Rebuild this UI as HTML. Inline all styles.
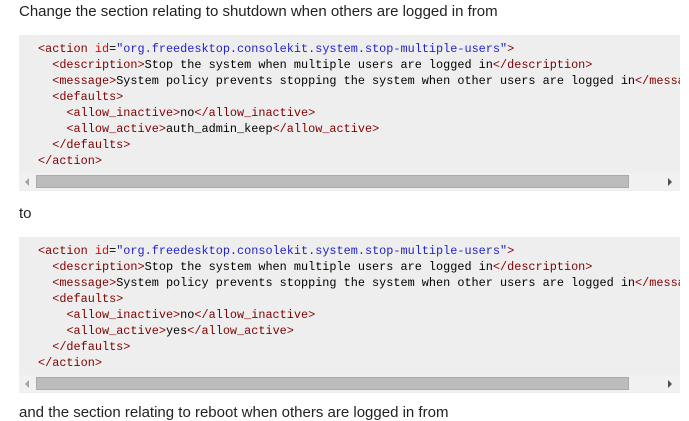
<!DOCTYPE html>
<html><head><style>
body{margin:0;width:689px;height:411px;overflow:hidden;background:#fff;position:relative;font-family:"Liberation Sans",Arial,sans-serif;}
.p{position:absolute;left:19px;font-size:15px;color:#222;margin:0;white-space:nowrap}
.blk{position:absolute;left:19px;width:661px;background:#eee;overflow:hidden}
pre{margin:0;padding:0 0 0 19px;font-family:"Liberation Mono",monospace;font-size:11.85px;line-height:16px;color:#000;white-space:pre}
.t{color:#800000}.a{color:#e00}.v{color:#2222cc}
.sb{position:absolute;left:0;right:0;height:17px;background:#f1f1f1}
.th{position:absolute;left:17px;width:593px;top:2px;height:13px;background:#bcbcbc;border:1px solid #aaa;box-sizing:border-box}
.la{position:absolute;left:6px;top:5px;width:0;height:0;border-top:4px solid transparent;border-bottom:4px solid transparent;border-right:4px solid #a3a3a3}
.ra{position:absolute;right:8px;top:5px;width:0;height:0;border-top:4px solid transparent;border-bottom:4px solid transparent;border-left:4px solid #505050}
</style></head><body>
<div class="p" style="top:3px">Change the section relating to shutdown when others are logged in from</div>
<div class="blk" style="top:35px;height:156px">
<pre style="padding-top:6px"><span class="t">&lt;action</span> <span class="a">id</span>=<span class="v">"org.freedesktop.consolekit.system.stop-multiple-users"</span><span class="t">&gt;</span>
  <span class="t">&lt;description&gt;</span>Stop the system when multiple users are logged in<span class="t">&lt;/description&gt;</span>
  <span class="t">&lt;message&gt;</span>System policy prevents stopping the system when other users are logged in<span class="t">&lt;/message&gt;</span>
  <span class="t">&lt;defaults&gt;</span>
    <span class="t">&lt;allow_inactive&gt;</span>no<span class="t">&lt;/allow_inactive&gt;</span>
    <span class="t">&lt;allow_active&gt;</span>auth_admin_keep<span class="t">&lt;/allow_active&gt;</span>
  <span class="t">&lt;/defaults&gt;</span>
<span class="t">&lt;/action&gt;</span></pre>
<div class="sb" style="top:138px"><div class="la"></div><div class="th"></div><div class="ra"></div></div>
</div>
<div class="p" style="top:205px">to</div>
<div class="blk" style="top:237px;height:156px">
<pre style="padding-top:6px"><span class="t">&lt;action</span> <span class="a">id</span>=<span class="v">"org.freedesktop.consolekit.system.stop-multiple-users"</span><span class="t">&gt;</span>
  <span class="t">&lt;description&gt;</span>Stop the system when multiple users are logged in<span class="t">&lt;/description&gt;</span>
  <span class="t">&lt;message&gt;</span>System policy prevents stopping the system when other users are logged in<span class="t">&lt;/message&gt;</span>
  <span class="t">&lt;defaults&gt;</span>
    <span class="t">&lt;allow_inactive&gt;</span>no<span class="t">&lt;/allow_inactive&gt;</span>
    <span class="t">&lt;allow_active&gt;</span>yes<span class="t">&lt;/allow_active&gt;</span>
  <span class="t">&lt;/defaults&gt;</span>
<span class="t">&lt;/action&gt;</span></pre>
<div class="sb" style="top:138px"><div class="la"></div><div class="th"></div><div class="ra"></div></div>
</div>
<div class="p" style="top:404px">and the section relating to reboot when others are logged in from</div>
</body></html>
